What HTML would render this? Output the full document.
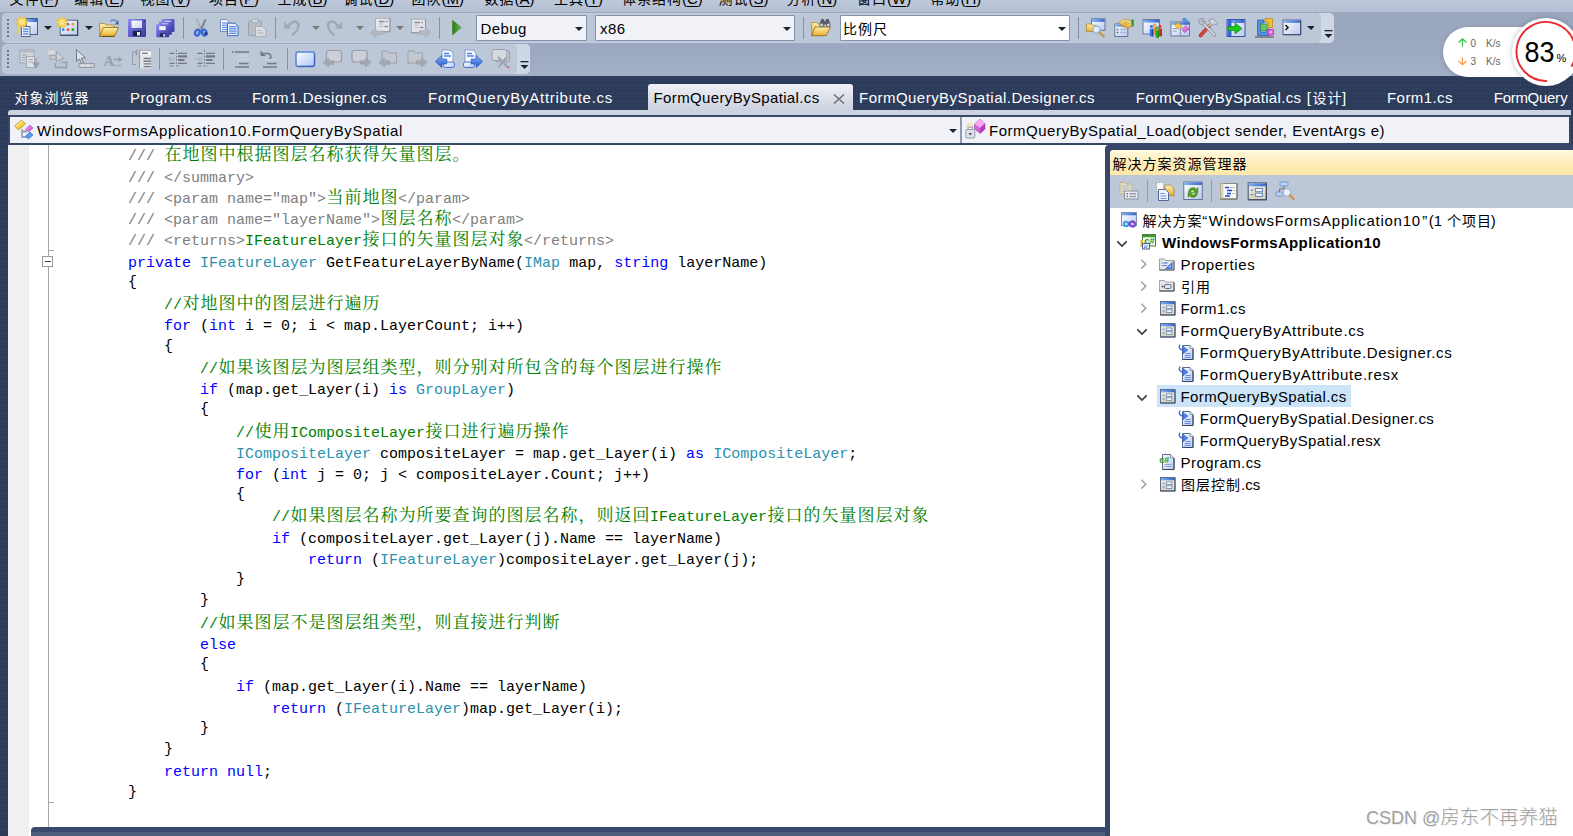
<!DOCTYPE html><html lang="zh"><head><meta charset="utf-8"><title>VS</title><style>
*{box-sizing:border-box}
html,body{margin:0;padding:0}
body{width:1573px;height:836px;overflow:hidden;position:relative;background:#2c3a59;
 font-family:"Liberation Sans","Noto Sans CJK SC",sans-serif;font-size:15px;color:#000}
.abs{position:absolute}
.ft{position:absolute;white-space:pre;line-height:20px;height:20px;margin-top:1px}
.lat{font-size:15px;letter-spacing:0.4px}
.cj{font-size:14px;letter-spacing:1px;padding-left:0.5px}
#dark{left:0;top:76px;width:1573px;height:760px;background-color:#2c3b5a;
 background-image:radial-gradient(circle at 1px 1px,#31405f 0.8px,rgba(0,0,0,0) 1.2px);background-size:4px 4px}
#menu{left:0;top:0;width:1573px;height:12px;background:linear-gradient(#bdc8da,#b4bfd3);overflow:hidden}
#menu>span{position:absolute;top:-11px;font-size:15px;line-height:20px;white-space:pre}
#menu u{text-decoration-thickness:1px;text-underline-offset:2px}
#tray{left:0;top:12px;width:1573px;height:64px;background:linear-gradient(#9aa7bf,#9ca9c1 60%,#a3afc6)}
.tb{position:absolute;left:2px;height:30px;background:#bcc7d8;border-radius:5px;box-shadow:0 0 0 0.5px #c8d1e0 inset}
.tb .ov{position:absolute;right:0;top:0;width:16px;height:30px;background:#d0d7e4;border-radius:0 5px 5px 0}
.tb .ov:before{content:"";position:absolute;left:-4px;top:0;width:7px;height:30px;background:#bcc7d8;border-radius:0 5px 5px 0}
.ic{position:absolute;width:20px;height:20px}
.ic svg{display:block;width:20px;height:20px;overflow:visible}
.sep{position:absolute;width:1px;height:22px;background:#8591a8}
.dd{position:absolute;width:0;height:0;border-left:4px solid transparent;border-right:4px solid transparent;border-top:4.5px solid #1b2233}
.dd.g{border-top-color:#7d7a76}
.grip{position:absolute;left:6px;width:2px;height:18px;background:repeating-linear-gradient(#6c7890 0,#6c7890 2px,rgba(0,0,0,0) 2px,rgba(0,0,0,0) 4px)}
.combo{position:absolute;top:2px;height:26px;border:1px solid #8693ab;background:#f1f3f9;border-radius:1px}
.combo .ct{position:absolute;left:4px;top:3px;line-height:20px;white-space:pre;color:#000}
.combo .dd{right:3px;top:10.5px}
#tabs span.tab{color:#fff}
#strip{left:8px;top:110px;width:1563px;height:5px;background:#ccd2e0;border-radius:3px 0 0 0}
#nav{left:8px;top:115px;width:1563px;height:30px;background:#36476a}
#nav .c{position:absolute;top:2px;height:26px;background:#f0f2f8}
#ed{left:8px;top:145px;width:1100px;height:691px;background:#fff;overflow:hidden}
#code{position:absolute;left:0;top:0}
.ln{position:absolute;left:120px;white-space:pre;font-family:"Liberation Mono","Noto Serif CJK SC",monospace;font-size:15px;line-height:22px;height:22px}
.ln i{font-style:normal;font-size:17px;letter-spacing:1px;line-height:0;position:relative;top:-0.3px;left:0.5px;font-family:"Noto Serif CJK SC",serif}
.g{color:#808080}.c{color:#008000}.k{color:#0000ff}.t{color:#2b91af}
#se{left:1105px;top:145px;width:468px;height:691px;background:#36476a;border-radius:4px 0 0 0}
#setitle{left:5px;top:5px;width:463px;height:25px;background:linear-gradient(#fff9e0,#ffefc0 45%,#ffe8a6);border-radius:3px 0 0 0}
#setb{left:5px;top:30px;width:463px;height:33px;background:#bcc7d8}
#tree{left:5px;top:63px;width:463px;height:628px;background:#fff}
.row{position:absolute;left:0;height:22px;width:463px}
.chev{position:absolute;width:10px;height:10px}
</style></head><body><svg width="0" height="0" style="position:absolute"><defs>
<linearGradient id="gWin" x1="0" y1="0" x2="1" y2="1"><stop offset="0" stop-color="#ffffff"/><stop offset="1" stop-color="#b9c9ec"/></linearGradient>
<linearGradient id="gTit" x1="0" y1="0" x2="1" y2="0"><stop offset="0" stop-color="#7fb0f2"/><stop offset="1" stop-color="#3566cf"/></linearGradient>
<linearGradient id="gFol" x1="0" y1="0" x2="0" y2="1"><stop offset="0" stop-color="#ffefad"/><stop offset="1" stop-color="#e9ae2a"/></linearGradient>
<linearGradient id="gFol2" x1="0" y1="0" x2="0" y2="1"><stop offset="0" stop-color="#fbe08a"/><stop offset="1" stop-color="#c99a35"/></linearGradient>
<linearGradient id="gGry" x1="0" y1="0" x2="1" y2="1"><stop offset="0" stop-color="#e9ebef"/><stop offset="1" stop-color="#a9adb5"/></linearGradient>
<linearGradient id="gFlp" x1="0" y1="0" x2="1" y2="1"><stop offset="0" stop-color="#8f8ff0"/><stop offset="0.5" stop-color="#5a5acb"/><stop offset="1" stop-color="#38389c"/></linearGradient>
<linearGradient id="gBlu" x1="0" y1="0" x2="0" y2="1"><stop offset="0" stop-color="#86b2f7"/><stop offset="1" stop-color="#2456cf"/></linearGradient>
<linearGradient id="gGrn" x1="0" y1="0" x2="1" y2="0"><stop offset="0" stop-color="#2a7a14"/><stop offset="1" stop-color="#63c04a"/></linearGradient>
<linearGradient id="gLbl" x1="0" y1="0" x2="1" y2="1"><stop offset="0" stop-color="#ffffff"/><stop offset="1" stop-color="#cfd4e8"/></linearGradient>
<radialGradient id="gSpk"><stop offset="0" stop-color="#ffffff"/><stop offset="0.3" stop-color="#ffe672"/><stop offset="0.8" stop-color="#f2bc1a" stop-opacity="0.85"/><stop offset="1" stop-color="#f0b400" stop-opacity="0.5"/></radialGradient>
<linearGradient id="gPnk" x1="0" y1="0" x2="1" y2="1"><stop offset="0" stop-color="#f7a6f3"/><stop offset="1" stop-color="#c046c0"/></linearGradient>
<linearGradient id="gBm" x1="0" y1="0" x2="1" y2="1"><stop offset="0" stop-color="#ffffff"/><stop offset="1" stop-color="#a9c6f8"/></linearGradient>
<linearGradient id="gFrm" x1="0" y1="0" x2="0" y2="1"><stop offset="0" stop-color="#f6f1df"/><stop offset="1" stop-color="#d9d1b5"/></linearGradient>
</defs></svg>
<div id="menu" class="abs">
<span style="left:9px"><span class="cj">文件</span>(<u>F</u>)</span>
<span style="left:73.7px"><span class="cj">编辑</span>(<u>E</u>)</span>
<span style="left:140px"><span class="cj">视图</span>(<u>V</u>)</span>
<span style="left:208.5px"><span class="cj">项目</span>(<u>P</u>)</span>
<span style="left:277px"><span class="cj">生成</span>(<u>B</u>)</span>
<span style="left:343px"><span class="cj">调试</span>(<u>D</u>)</span>
<span style="left:411px"><span class="cj">团队</span>(<u>M</u>)</span>
<span style="left:484px"><span class="cj">数据</span>(<u>A</u>)</span>
<span style="left:553.4px"><span class="cj">工具</span>(<u>T</u>)</span>
<span style="left:621.5px"><span class="cj">体系结构</span>(<u>C</u>)</span>
<span style="left:718px"><span class="cj">测试</span>(<u>S</u>)</span>
<span style="left:786px"><span class="cj">分析</span>(<u>N</u>)</span>
<span style="left:856.5px"><span class="cj">窗口</span>(<u>W</u>)</span>
<span style="left:930px"><span class="cj">帮助</span>(<u>H</u>)</span>
</div>
<div id="tray" class="abs"></div>
<div class="tb" style="top:13px;width:1332px">
<div class="grip" style="top:6px;left:5px"></div>
<div class="ic" style="left:16px;top:5px"><svg viewBox="0 0 20 20"><rect x="0" y="2" width="2" height="14" fill="#f3cf4a" opacity="0.8"/><rect x="8.5" y="0.5" width="11" height="16" fill="url(#gWin)" stroke="#4c5f86" stroke-width="1"/><rect x="9" y="1" width="10" height="3" fill="url(#gTit)"/><rect x="3.5" y="8.5" width="8.5" height="10" fill="#f4f7ff" stroke="#53658c" stroke-width="1"/><path d="M5 11h5.5M5 13.5h5.5M5 16h5.5" stroke="#5c8fe8" stroke-width="1.4"/><g><circle cx="4" cy="4" r="5.600" fill="url(#gSpk)"/><path d="M4 -1v10M-1 4h10M0.5 0.5l7 7M7.5 0.5l-7 7" stroke="#fff6c8" stroke-width="0.9" opacity="0.9"/><path d="M4 0v8M0 4h8" stroke="#f5c526" stroke-width="0.5"/></g></svg></div>
<div class="dd" style="left:42px;top:13px"></div>
<div class="ic" style="left:56px;top:5px"><svg viewBox="0 0 20 20"><rect x="2.2" y="2.2" width="17.3" height="15" fill="url(#gWin)" stroke="#55688e" stroke-width="1"/><path d="M2.5 17.4h17.2v-15" stroke="#3e4e73" stroke-width="1.2" fill="none"/><circle cx="10" cy="6.2" r="1.4" fill="#7a6fe0"/><circle cx="14.9" cy="6.2" r="1.4" fill="#ff9c1a"/><circle cx="5.2" cy="11.7" r="1.4" fill="#2a8cff"/><circle cx="10" cy="11.7" r="1.4" fill="#ff4a1a"/><circle cx="14.9" cy="11.7" r="1.4" fill="#1fae1f"/><g transform="translate(0,0.5)"><g><circle cx="4" cy="4" r="5.600" fill="url(#gSpk)"/><path d="M4 -1v10M-1 4h10M0.5 0.5l7 7M7.5 0.5l-7 7" stroke="#fff6c8" stroke-width="0.9" opacity="0.9"/><path d="M4 0v8M0 4h8" stroke="#f5c526" stroke-width="0.5"/></g></g></svg></div>
<div class="dd" style="left:83px;top:13px"></div>
<div class="ic" style="left:97px;top:5px"><svg viewBox="0 0 20 20"><path d="M0.5 5.5h5l1.5 1.5h8v11.5h-14.5z" fill="url(#gFol)" stroke="#a98a3a" stroke-width="0.8"/><path d="M4.5 9.5h15l-4 9h-15z" fill="url(#gFol)" stroke="#8a6a1c" stroke-width="0.8"/><path d="M3 18.3h12.3" stroke="#4a3a10" stroke-width="0.8"/><path d="M11.5 3.2c2.5-2 5.5-1.5 6.6 1" fill="none" stroke="#5f86c6" stroke-width="1.5"/><path d="M19.6 2.2v4.3h-4z" fill="#3b64ad"/></svg></div>
<div class="ic" style="left:125px;top:5px"><svg viewBox="0 0 20 20"><rect x="1" y="1" width="18" height="18" rx="1.2" fill="url(#gFlp)"/><rect x="4.5" y="2.5" width="10.5" height="7.5" fill="url(#gLbl)"/><rect x="6" y="13" width="8" height="5" fill="#1c1c3c"/><rect x="10" y="14" width="3" height="3.5" fill="#e8e8f4"/><rect x="16.5" y="2.5" width="1.5" height="1.5" fill="#2c2c80"/></svg></div>
<div class="ic" style="left:153px;top:5px"><svg viewBox="0 0 20 20"><g transform="translate(6.5,1)"><rect x="0" y="0" width="13" height="13" rx="1" fill="url(#gFlp)"/><rect x="3" y="1.8" width="6.5" height="4" fill="#eef0fa"/><rect x="4" y="9" width="5.5" height="3.5" fill="#23234a"/><rect x="7" y="9.8" width="2" height="2.5" fill="#d8d8ec"/></g><g transform="translate(3.8,3.7)"><rect x="0" y="0" width="13" height="13" rx="1" fill="url(#gFlp)"/><rect x="3" y="1.8" width="6.5" height="4" fill="#eef0fa"/><rect x="4" y="9" width="5.5" height="3.5" fill="#23234a"/><rect x="7" y="9.8" width="2" height="2.5" fill="#d8d8ec"/></g><g transform="translate(1.2,6.3)"><rect x="0" y="0" width="13" height="13" rx="1" fill="url(#gFlp)"/><rect x="3" y="1.8" width="6.5" height="4" fill="#eef0fa"/><rect x="4" y="9" width="5.5" height="3.5" fill="#23234a"/><rect x="7" y="9.8" width="2" height="2.5" fill="#d8d8ec"/></g></svg></div>
<div class="sep" style="left:181px;top:4px"></div>
<div class="ic" style="left:189px;top:5px"><svg viewBox="0 0 20 20"><path d="M4.300 1.300h2.200l4.500 10h-2.500z" fill="#9a9fa8"/><path d="M15.700 1.300h-2.200l-4.500 10h2.500z" fill="#7f848e"/><path d="M5.300 1.800l3.800 8.500" stroke="#d5d8dd" stroke-width="0.800"/><ellipse cx="6.400" cy="14.600" rx="2.300" ry="3" transform="rotate(22 6.400 14.600)" fill="#9ab8ee" stroke="#3a68d2" stroke-width="2.300"/><ellipse cx="13.300" cy="14.600" rx="2.300" ry="3" transform="rotate(-22 13.300 14.600)" fill="#9ab8ee" stroke="#3a68d2" stroke-width="2.300"/><circle cx="14.600" cy="15.600" r="1.300" fill="#1c2f60"/></svg></div>
<div class="ic" style="left:217px;top:5px"><svg viewBox="0 0 20 20"><path d="M1.5 1.5h6l3 3v9h-9z" fill="#f5f8ff" stroke="#6f86b8" stroke-width="0.9"/><path d="M3.0 5.0h6" stroke="#4f86e6" stroke-width="1.1"/><path d="M3.0 7.2h6" stroke="#4f86e6" stroke-width="1.1"/><path d="M3.0 9.4h6" stroke="#4f86e6" stroke-width="1.1"/><path d="M3.0 11.600000000000001h6" stroke="#4f86e6" stroke-width="1.1"/><path d="M8.5 5.2h7.5l3 3v9.5h-10.5z" fill="#eaf1ff" stroke="#2f59b6" stroke-width="0.9"/><path d="M10.0 8.7h7.5" stroke="#3f77e2" stroke-width="1.1"/><path d="M10.0 10.899999999999999h7.5" stroke="#3f77e2" stroke-width="1.1"/><path d="M10.0 13.099999999999998h7.5" stroke="#3f77e2" stroke-width="1.1"/><path d="M10.0 15.299999999999997h7.5" stroke="#3f77e2" stroke-width="1.1"/></svg></div>
<div class="ic" style="left:245px;top:5px"><svg viewBox="0 0 20 20"><rect x="1.5" y="3" width="13" height="14.5" rx="1" fill="#b9bdc6" stroke="#9398a3" stroke-width="0.8"/><rect x="5" y="1.2" width="6" height="3.5" rx="1" fill="#d4d7dd" stroke="#9a9fa9" stroke-width="0.7"/><path d="M8.5 8.5h7l3.5 3.5v6.5h-10.5z" fill="#d9dce2" stroke="#a2a7b1" stroke-width="0.8"/><path d="M10.5 12.5h4M10.5 15h6" stroke="#aeb3bd" stroke-width="1"/></svg></div>
<div class="sep" style="left:273px;top:4px"></div>
<div class="ic" style="left:281px;top:5px"><svg viewBox="0 0 20 20"><path d="M5.500 8C8 4 12 2.300 14.500 4.500C17 7 15 13 10 16.500" fill="none" stroke="#a3a8b3" stroke-width="2.500" stroke-linecap="round"/><path d="M1.200 3.700v7.100h7.100z" fill="#a3a8b3"/></svg></div>
<div class="dd g" style="left:310px;top:13px"></div>
<div class="ic" style="left:325px;top:5px"><svg viewBox="0 0 20 20"><path d="M11 8C8.500 4 4.500 2.300 2 4.500C-0.500 7 1.500 13 6.500 16.500" fill="none" stroke="#a3a8b3" stroke-width="2.500" stroke-linecap="round"/><path d="M15.300 3.700v7.100h-7.100z" fill="#a3a8b3"/></svg></div>
<div class="dd g" style="left:354px;top:13px"></div>
<div class="ic" style="left:369px;top:5px"><svg viewBox="0 0 20 20"><rect x="4.500" y="0.300" width="14.500" height="13.500" fill="#e3e5ea" stroke="#a6abb5" stroke-width="0.900"/><path d="M4.500 13.800h14.500v-13.500" fill="none" stroke="#8d929c" stroke-width="1"/><path d="M8 3.500h6M8 6h4M8 8.500h4.500" stroke="#b9bdc6" stroke-width="1.100"/><path d="M8 3.500h5.500M15 3.500h1.500M13.500 8.500h3.500" stroke="#8a8f99" stroke-width="1.300"/><path d="M-0.800 14.800l5.800-4.600v2.800h6.500v3.600h-6.500v2.800z" fill="#b4b8c1" stroke="#a0a5af" stroke-width="0.500"/></svg></div>
<div class="dd g" style="left:394px;top:13px"></div>
<div class="ic" style="left:408px;top:5px"><svg viewBox="0 0 20 20"><rect x="1.500" y="1.300" width="14" height="13.500" fill="#e3e5ea" stroke="#a6abb5" stroke-width="0.900"/><path d="M1.500 14.800h14v-13.500" fill="none" stroke="#8d929c" stroke-width="1"/><path d="M4.500 4.500h6M4.500 7h4M4.500 9.500h4.500" stroke="#b9bdc6" stroke-width="1.100"/><path d="M4.500 4.500h5.500M11.500 4.500h1.500M10 9.500h3.500" stroke="#8a8f99" stroke-width="1.300"/><path d="M21 14.600l-5.800-4.800v2.900h-6v3.800h6v2.900z" fill="#b4b8c1" stroke="#a0a5af" stroke-width="0.500"/></svg></div>
<div class="sep" style="left:437px;top:4px"></div>
<div class="ic" style="left:445px;top:5px"><svg viewBox="0 0 20 20"><path d="M5.5 2.3l8.7 7.3-8.7 7.3z" fill="url(#gGrn)" stroke="#2a7a14" stroke-width="0.5"/></svg></div>
<div class="combo" style="left:473.5px;width:111px"><span class="ct lat" id="cb1">Debug</span><div class="dd"></div></div>
<div class="combo" style="left:593px;width:199.5px"><span class="ct lat" id="cb2">x86</span><div class="dd"></div></div>
<div class="sep" style="left:801px;top:4px"></div>
<div class="ic" style="left:809px;top:5px"><svg viewBox="0 0 20 20"><path d="M0.7 4.5h5l1.3 1.5h6v11.5h-12.3z" fill="url(#gFol)" stroke="#a98a3a" stroke-width="0.8"/><path d="M4 9h15.5l-4.5 8.7h-14.3z" fill="url(#gFol)" stroke="#8a6a1c" stroke-width="0.8"/><path d="M9 6.5l1.6-5h2l0.6 2.5h1.6l0.6-2.5h2l1.6 5" fill="#5a5f6b" stroke="#3c404a" stroke-width="0.7"/><circle cx="10.7" cy="7" r="1.9" fill="#cfd3dc" stroke="#4a4e59" stroke-width="0.8"/><circle cx="17.3" cy="7" r="1.9" fill="#cfd3dc" stroke="#4a4e59" stroke-width="0.8"/></svg></div>
<div class="combo" style="left:838px;width:230px;background:#fff"><span class="ct" style="left:1.5px"><span class="cj">比例尺</span></span><div class="dd"></div></div>
<div class="sep" style="left:1076px;top:4px"></div>
<div class="ic" style="left:1084px;top:5px"><svg viewBox="0 0 20 20"><rect x="5.5" y="0.8" width="13.5" height="11.5" fill="url(#gWin)" stroke="#5a6c94" stroke-width="0.9"/><rect x="5.9" y="1.2000000000000002" width="12.7" height="2.6" fill="url(#gTit)"/><path d="M0.5 6h5l1 1.2h3v6.3h-9z" fill="url(#gFol)" stroke="#a58432" stroke-width="0.7"/><circle cx="10.5" cy="11.5" r="3.6" fill="#d9ecfb" stroke="#8fb6dc" stroke-width="1.3"/><path d="M13.2 14.2l4.6 4.3" stroke="#c9983a" stroke-width="2.2" stroke-linecap="round"/></svg></div>
<div class="ic" style="left:1112px;top:5px"><svg viewBox="0 0 20 20"><rect x="0.8" y="6" width="13" height="12.5" fill="url(#gWin)" stroke="#5a6c94" stroke-width="0.9"/><rect x="1.2000000000000002" y="6.4" width="12.2" height="2.2" fill="url(#gTit)"/><path d="M2.5 11.5h2M2.5 14.5h2" stroke="#6a7aa0" stroke-width="1.4"/><path d="M6 11.5h6M6 14.5h6" stroke="#a9b6d4" stroke-width="1.4"/><path d="M4.5 4.5l5-3.5 7 1.5 2 5-4 2.5-6-1.5z" fill="url(#gFol)" stroke="#a8862c" stroke-width="0.7"/><rect x="17.5" y="1.5" width="2.3" height="7" fill="#2d9a3a"/><path d="M6.5 5l5 4M8.5 3.5l5 4M10.5 2.5l4.5 3.5" stroke="#a0781c" stroke-width="0.7"/></svg></div>
<div class="ic" style="left:1140px;top:5px"><svg viewBox="0 0 20 20"><rect x="1" y="1.5" width="16.5" height="14.5" fill="url(#gWin)" stroke="#5a6c94" stroke-width="0.9"/><rect x="1.4" y="1.9" width="15.7" height="2.6" fill="url(#gTit)"/><circle cx="12.5" cy="7.2" r="1.6" fill="#f0a030"/><path d="M10.8 9.5h3.4v7.5h-3.4z" fill="#f0a030"/><path d="M13.0 9.5h1.2v7.5h-1.2z" fill="#c07a10"/><circle cx="9.5" cy="8.6" r="1.6" fill="#3a6ee8"/><path d="M7.8 10.899999999999999h3.4v7.5h-3.4z" fill="#3a6ee8"/><path d="M10.0 10.899999999999999h1.2v7.5h-1.2z" fill="#1c44b0"/><circle cx="18" cy="8.4" r="1.6" fill="#e83a2a"/><path d="M16.3 10.7h3.4v7.5h-3.4z" fill="#e83a2a"/><path d="M18.5 10.7h1.2v7.5h-1.2z" fill="#a81a10"/><circle cx="15.2" cy="10" r="1.6" fill="#2eb42e"/><path d="M13.5 12.3h3.4v7.5h-3.4z" fill="#2eb42e"/><path d="M15.7 12.3h1.2v7.5h-1.2z" fill="#128012"/></svg></div>
<div class="ic" style="left:1168px;top:5px"><svg viewBox="0 0 20 20"><rect x="1" y="4" width="18.5" height="14" fill="url(#gWin)" stroke="#5a6c94" stroke-width="0.9"/><rect x="1.4" y="4.4" width="17.7" height="2.4" fill="url(#gTit)"/><path d="M10.3 6.5v11.3" stroke="#6a7aa0" stroke-width="0.8"/><path d="M2.8 10.5h5M2.8 13h4" stroke="#8a98b8" stroke-width="1.2"/><path d="M13.5 0.5l3-0.5 2 2.5-3 2.2z" fill="#4f9be8" stroke="#2a62b8" stroke-width="0.5" transform="translate(-1,0.3)"/><path d="M3.5 6.5l4-2 3.5 3.8-3.5 2.5z" fill="#f5c838" stroke="#b8901a" stroke-width="0.6" transform="translate(1,0.2)"/><path d="M12 11l4.5-3.5 3 3.5-4.5 3.7z" fill="url(#gPnk)" stroke="#a83aa8" stroke-width="0.6" transform="translate(-0.5,0)"/></svg></div>
<div class="ic" style="left:1196px;top:5px"><svg viewBox="0 0 20 20"><path d="M2.500 17.500l9-10" stroke="#a82018" stroke-width="3.400" stroke-linecap="round"/><path d="M2.500 17.500l9-10" stroke="#e2473c" stroke-width="2" stroke-linecap="round"/><path d="M11 2.500l3.500-2 5 4.500-1.500 2-2-1.500-2 2z" fill="#d3d7df" stroke="#7f8592" stroke-width="0.800"/><path d="M10.500 8.500l2.500-3" stroke="#b9bec8" stroke-width="2.200"/><path d="M5 5l11.500 12" stroke="#7f8592" stroke-width="3.200" stroke-linecap="round"/><path d="M5 5l11.500 12" stroke="#dfe2e8" stroke-width="1.800" stroke-linecap="round"/><path d="M0.800 3.800a3.300 3.300 0 0 1 4.800-3l-2.200 2 1.200 1.400 2.300-1.900a3.300 3.300 0 0 1-4.400 4z" fill="#c6cad3" stroke="#7f8592" stroke-width="0.800"/></svg></div>
<div class="ic" style="left:1224px;top:5px"><svg viewBox="0 0 20 20"><rect x="1" y="1.500" width="18" height="17" fill="url(#gWin)" stroke="#3a57a8" stroke-width="1"/><rect x="1.500" y="2" width="17" height="3" fill="url(#gTit)"/><rect x="1.500" y="2" width="4" height="16" fill="#3a66d4"/><path d="M2 8.500h7v-3.500l7 5.500-7 5.500v-3.500h-7z" fill="#19c819" stroke="#0c8a0c" stroke-width="0.700"/></svg></div>
<div class="ic" style="left:1252px;top:5px"><svg viewBox="0 0 20 20"><path d="M1 19h19" stroke="#7c7c82" stroke-width="1.800"/><path d="M3.500 2h6.500v3h-3.500v9h6v-3h3v6.500h-12z" fill="#4f90e0" stroke="#2a5cae" stroke-width="0.700"/><rect x="6.500" y="6" width="6.500" height="6.500" fill="#6cbf6c" stroke="#3f8f4f" stroke-width="0.700"/><path d="M11 0.500h7.500v9h-4v-5.500h-3.500z" fill="#f2c230" stroke="#b88a10" stroke-width="0.700"/><rect x="14" y="11.500" width="5.500" height="5.500" fill="#e860e0" stroke="#b030a8" stroke-width="0.700"/><rect x="15.800" y="13.300" width="1.900" height="1.900" fill="#fbd0f8"/></svg></div>
<div class="ic" style="left:1280px;top:5px"><svg viewBox="0 0 20 20"><rect x="1" y="2" width="17.500" height="14.500" fill="url(#gWin)" stroke="#53658e" stroke-width="1"/><rect x="1.500" y="2.500" width="16.500" height="2.300" fill="url(#gTit)"/><path d="M1.500 16.800h17.300v-14" stroke="#3c4b70" stroke-width="1" fill="none"/><path d="M3.500 7l2.500 2.500-2.500 2.500" stroke="#111" stroke-width="1.500" fill="none"/></svg></div>
<div class="dd" style="left:1305px;top:13px"></div>
<div class="ov"><svg style="position:absolute;left:6px;top:16.5px" width="9" height="9" viewBox="0 0 9 9"><rect x="0.5" y="0" width="8" height="1.3" fill="#1b2233"/><path d="M0.5 4h8l-4 4z" fill="#1b2233"/></svg></div>
</div>
<div class="tb" style="top:44px;width:528px">
<div class="grip" style="top:6px;left:5px"></div>
<div class="ic" style="left:17px;top:5px"><svg viewBox="0 0 20 20"><rect x="1" y="1" width="14" height="13" fill="#d3d6dc" stroke="#989da8" stroke-width="0.8"/><rect x="1.4" y="1.400" width="13.200" height="2.200" fill="#b5b9c2"/><path d="M3 6h5M3 8.500h4M3 11h4" stroke="#989da8" stroke-width="0.9"/><rect x="7.500" y="7.500" width="8" height="11" fill="#e0e2e7" stroke="#989da8" stroke-width="0.8"/><path d="M9 10.500h5M9 13h5" stroke="#989da8" stroke-width="0.8"/><path d="M17 9v6.500M14.200 14l2.800 4.500 2.800-4.500z" fill="#989da8" stroke="#989da8" stroke-width="1.200"/></svg></div>
<div class="ic" style="left:45px;top:5px"><svg viewBox="0 0 20 20"><rect x="1" y="1" width="7" height="4.500" fill="#d8dbe0" stroke="#c2c6ce" stroke-width="0.8"/><rect x="3" y="6.500" width="6" height="4" fill="#c4c8d0" stroke="#989da8" stroke-width="0.8"/><path d="M9.500 2.500v10l2.500-2 1.800 3.800 1.700-0.800-1.800-3.700 3.300-0.300z" fill="#d0d3da" stroke="#989da8" stroke-width="0.8"/><path d="M8.500 14v4.500h11v-5h-3.500" fill="none" stroke="#989da8" stroke-width="1.500"/></svg></div>
<div class="ic" style="left:73px;top:5px"><svg viewBox="0 0 20 20"><path d="M1.500 0.500v12l3-2.500 2.200 4.500 1.900-0.900-2.200-4.400 4-0.400z" fill="#dfe2e8" stroke="#747984" stroke-width="1"/><rect x="4" y="14.500" width="15.500" height="4" fill="#c6cad2" stroke="#989da8" stroke-width="1"/><path d="M6 16.500h3M10.500 16.500h5" stroke="#eef0f3" stroke-width="1"/></svg></div>
<div class="ic" style="left:101px;top:5px"><svg viewBox="0 0 20 20"><text x="0.5" y="17" font-family='"Liberation Serif",serif' font-size="15" font-weight="bold" fill="#989da8">A</text><path d="M10.500 10.500h6" stroke="#989da8" stroke-width="1.600"/><path d="M15.500 7.500l4 3-4 3z" fill="#989da8"/><path d="M11 16.500h8" stroke="#989da8" stroke-width="1.500" stroke-dasharray="1.500 1.200"/></svg></div>
<div class="ic" style="left:129px;top:5px"><svg viewBox="0 0 20 20"><path d="M5 3h-3.500v12.500h3.500" fill="none" stroke="#989da8" stroke-width="1"/><path d="M5.500 0.500v6" stroke="#989da8" stroke-width="1.600"/><rect x="8.500" y="1" width="11.500" height="18.500" fill="#e4e6ea"/><path d="M8.500 0.800v18.700" stroke="#989da8" stroke-width="1.200"/><path d="M8.500 1.200h11.500" stroke="#989da8" stroke-width="0.800"/><rect x="10" y="3" width="10" height="2.600" fill="#fff"/><path d="M11 4.300h6" stroke="#747984" stroke-width="1.300"/><path d="M12.500 9.500h7.500M12.500 12.200h7.500M12.500 14.900h7.500M12.500 17.600h7.500" stroke="#747984" stroke-width="1.400"/></svg></div>
<div class="sep" style="left:157px;top:4px"></div>
<div class="ic" style="left:165px;top:5px"><svg viewBox="0 0 20 20"><path d="M9.500 1v18" stroke="#747984" stroke-width="1" stroke-dasharray="1.500 1.500"/><path d="M2.500 4.300h5M11 4.300h9M2.500 14.400h5M11 14.400h9" stroke="#747984" stroke-width="1.300"/><path d="M2.500 17h4M11 17h1.500" stroke="#989da8" stroke-width="1.300"/><path d="M11 7.400h9" stroke="#747984" stroke-width="2.200"/><path d="M11 11h6.500" stroke="#747984" stroke-width="2"/><path d="M1 10h7" stroke="#b2b6bf" stroke-width="1.400"/><path d="M0.300 10l4.200-3v6z" fill="#b2b6bf"/></svg></div>
<div class="ic" style="left:193px;top:5px"><svg viewBox="0 0 20 20"><path d="M9.500 1v18" stroke="#747984" stroke-width="1" stroke-dasharray="1.500 1.500"/><path d="M2.500 4.300h5M11 4.300h9M2.500 14.400h5M11 14.400h9" stroke="#747984" stroke-width="1.300"/><path d="M2.500 17h4M11 17h1.500" stroke="#989da8" stroke-width="1.300"/><path d="M11 7.400h9" stroke="#747984" stroke-width="2.200"/><path d="M11 11h6.500" stroke="#747984" stroke-width="2"/><path d="M0.500 10h7" stroke="#b2b6bf" stroke-width="1.400"/><path d="M8.300 10l-4.200-3v6z" fill="#b2b6bf"/></svg></div>
<div class="sep" style="left:221px;top:4px"></div>
<div class="ic" style="left:229px;top:5px"><svg viewBox="0 0 20 20"><path d="M1 3h1.800M4 3h14" stroke="#747984" stroke-width="1.600"/><path d="M5.500 6.800h12M5.500 10.600h12" stroke="#cfd3da" stroke-width="1.200"/><path d="M8 14.500h9.500M4 18h14" stroke="#747984" stroke-width="1.600"/></svg></div>
<div class="ic" style="left:257px;top:5px"><svg viewBox="0 0 20 20"><path d="M3.500 4.500h5.500a3.200 3.200 0 0 1 1.200 6" fill="none" stroke="#747984" stroke-width="1.600"/><path d="M1.500 1.500v5.500h5.500z" fill="#747984"/><path d="M5.500 10.600h12" stroke="#cfd3da" stroke-width="1.200"/><path d="M8 14.500h9.500M4 18h14" stroke="#747984" stroke-width="1.600"/></svg></div>
<div class="sep" style="left:285px;top:4px"></div>
<div class="ic" style="left:293px;top:5px"><svg viewBox="0 0 20 20"><rect x="1" y="3" width="18.500" height="14.500" rx="2.200" fill="url(#gBm)" stroke="#5f86dc" stroke-width="1.600"/><path d="M2.500 17.300h15.500a1.500 1.500 0 0 0 1.500-1.500v-10" fill="none" stroke="#2f56b0" stroke-width="0.900"/></svg></div>
<div class="ic" style="left:321px;top:5px"><svg viewBox="0 0 20 20"><rect x="3.5" y="1.500" width="15" height="11.500" rx="2.500" fill="#cdd0d8" stroke="#989da8" stroke-width="1.200"/><path d="M0 13.500l5.500-4.500v2.700h5v3.600h-5v2.700z" fill="#a3a8b2" stroke="#8f949e" stroke-width="0.500"/></svg></div>
<div class="ic" style="left:349px;top:5px"><svg viewBox="0 0 20 20"><rect x="1" y="1.500" width="15" height="11.500" rx="2.500" fill="#cdd0d8" stroke="#989da8" stroke-width="1.200"/><path d="M20 13.500l-5.500-4.500v2.700h-5v3.600h5v2.700z" fill="#a3a8b2" stroke="#8f949e" stroke-width="0.500"/></svg></div>
<div class="ic" style="left:377px;top:5px"><svg viewBox="0 0 20 20"><path d="M3 2h6l1 2h7.500v10h-14.500z" fill="#c3c7cf" stroke="#989da8" stroke-width="0.900"/><path d="M0 13.500l5.500-4.500v2.700h5v3.600h-5v2.700z" fill="#a3a8b2" stroke="#8f949e" stroke-width="0.500"/></svg></div>
<div class="ic" style="left:405px;top:5px"><svg viewBox="0 0 20 20"><path d="M1 2h6l1 2h7.500v10h-14.500z" fill="#c3c7cf" stroke="#989da8" stroke-width="0.900"/><path d="M20 13.500l-5.500-4.500v2.700h-5v3.600h5v2.700z" fill="#a3a8b2" stroke="#8f949e" stroke-width="0.500"/></svg></div>
<div class="ic" style="left:433px;top:5px"><svg viewBox="0 0 20 20"><path d="M7 1h8l3 3v11h-11z" fill="#f6f9ff" stroke="#7d93c4" stroke-width="0.900"/><path d="M9 4.500h5M9 7h7" stroke="#4c84ea" stroke-width="1.300"/><rect x="8.500" y="13" width="11" height="5.500" rx="2" fill="url(#gBm)" stroke="#4a6fd0" stroke-width="1"/><path d="M0.300 12.500l6.500-6v3.500h5v5h-5v3.500z" fill="url(#gBlu)" stroke="#2450c0" stroke-width="0.600"/></svg></div>
<div class="ic" style="left:461px;top:5px"><svg viewBox="0 0 20 20"><path d="M2 1h8l3 3v11h-11z" fill="#f6f9ff" stroke="#7d93c4" stroke-width="0.900"/><path d="M4 4.500h5M4 7h7" stroke="#4c84ea" stroke-width="1.300"/><rect x="0.500" y="13" width="11" height="5.500" rx="2" fill="url(#gBm)" stroke="#4a6fd0" stroke-width="1"/><path d="M19.700 12.500l-6.500-6v3.500h-5v5h5v3.500z" fill="url(#gBlu)" stroke="#2450c0" stroke-width="0.600"/></svg></div>
<div class="ic" style="left:489px;top:5px"><svg viewBox="0 0 20 20"><rect x="4" y="1.500" width="14.500" height="11.500" rx="2.500" fill="#c5c8d0" stroke="#989da8" stroke-width="1"/><rect x="1" y="0.500" width="15" height="11" rx="2.500" fill="#d6d9df" stroke="#989da8" stroke-width="1"/><path d="M7 8l10 10.500M15 8.500l-7.500 10" stroke="#9fa4ae" stroke-width="2"/><circle cx="17.500" cy="18.500" r="0.800" fill="#e04030"/></svg></div>
<div class="ov"><svg style="position:absolute;left:6px;top:16.5px" width="9" height="9" viewBox="0 0 9 9"><rect x="0.5" y="0" width="8" height="1.3" fill="#1b2233"/><path d="M0.5 4h8l-4 4z" fill="#1b2233"/></svg></div>
</div>
<div id="dark" class="abs"></div>
<div id="tabs" class="abs" style="left:0;top:76px;width:1571px;height:34px;overflow:hidden">
<div class="abs" style="left:648px;top:8px;width:205px;height:26px;background:linear-gradient(#eff1f7,#dde1eb 50%,#ccd2e0);border-radius:3px 3px 0 0"></div>
<span class="ft" style="left:14px;top:11px;color:#fff"><span class="cj">对象浏览器</span></span>
<span id="tb1" class="ft" style="left:130px;letter-spacing:0.531px;top:11px;color:#fff;font-size:15px">Program.cs</span>
<span id="tb2" class="ft" style="left:252px;letter-spacing:0.537px;top:11px;color:#fff;font-size:15px">Form1.Designer.cs</span>
<span id="tb3" class="ft" style="left:428px;letter-spacing:0.722px;top:11px;color:#fff;font-size:15px">FormQueryByAttribute.cs</span>
<span id="tb4" class="ft" style="left:653.6px;letter-spacing:0.358px;top:11px;color:#000;font-size:15px">FormQueryBySpatial.cs</span>
<span id="tb5" class="ft" style="left:859px;letter-spacing:0.475px;top:11px;color:#fff;font-size:15px">FormQueryBySpatial.Designer.cs</span>
<span id="tb7" class="ft" style="left:1387px;letter-spacing:0.436px;top:11px;color:#fff;font-size:15px">Form1.cs</span>
<span id="tb6" class="ft" style="left:1135.8px;letter-spacing:0.343px;top:11px;color:#fff;font-size:15px">FormQueryBySpatial.cs</span>
<span class="ft" style="left:1306.8px;top:11px;color:#fff">[</span>
<span class="ft" style="left:1312px;top:11px;color:#fff"><span class="cj">设计</span></span>
<span class="ft" style="left:1342px;top:11px;color:#fff">]</span>
<span id="tb8" class="ft" style="left:1493.8px;letter-spacing:-0.293px;top:11px;color:#fff;font-size:15px">FormQuer</span>
<span class="ft" style="left:1560.3px;top:11px;color:#fff;letter-spacing:0.3px">y<span style="margin-left:4px">ByAttribute.cs</span></span>
<svg class="abs" style="left:833px;top:18px" width="12" height="10" viewBox="0 0 12 10"><path d="M1 0.5L11 9.5M11 0.5L1 9.5" stroke="#6f7075" stroke-width="1.5" fill="none"/></svg>
</div>
<div id="strip" class="abs"></div>
<div id="nav" class="abs">
<div class="c" style="left:2px;width:950px"></div><div class="c" style="left:954px;width:607px"></div>
<div class="abs" style="left:952px;top:2px;width:2px;height:26px;background:#8e9ab3"></div>
<div class="ic" style="left:6px;top:4px"><svg viewBox="0 0 20 20"><path d="M8 10v8h5M8 12.500h5" fill="none" stroke="#7f8ca8" stroke-width="1.300"/><path d="M0.500 7l7-6 4 4-7 6z" fill="#f3c83c" stroke="#b8901c" stroke-width="0.700"/><path d="M1.500 7l6-5 1.200 1.200-6 5z" fill="#fff2b0" opacity="0.700"/><path d="M11.500 10l4.500-4 3 3-4.500 4z" fill="url(#gPnk)" stroke="#b040b0" stroke-width="0.600"/><path d="M11.500 17l4.500-4 3 3-4.500 4z" fill="#5c9cf0" stroke="#2c64c0" stroke-width="0.600"/></svg></div>
<div class="ic" style="left:957px;top:4px"><svg viewBox="0 0 20 20"><path d="M9.500 5l5.500-5 5 4.500v5.500l-5 4.500-5.500-4.500z" fill="#d860d8" stroke="#a030a0" stroke-width="0.500"/><path d="M9.500 5l5.500-5 5 4.500-5 4.500z" fill="#f8a8f4"/><path d="M15 9v5.500l5-4.500v-5.500z" fill="#b040b4"/><rect x="0.800" y="10.500" width="9" height="8.500" rx="1.200" fill="#dfe2ea" stroke="#8c92a0" stroke-width="0.900"/><path d="M3 10.500v-2.500h4.500v2.500" fill="none" stroke="#a8adb8" stroke-width="1.300"/><path d="M3.500 14h3.500l-1.750 2.500z" fill="#4c5060"/><path d="M2.500 5h5M1.500 7h5" stroke="#f0dc78" stroke-width="1"/></svg></div>
<span id="nv1" class="ft" style="left:29px;letter-spacing:0.664px;top:5px;font-size:15px">WindowsFormsApplication10.FormQueryBySpatial</span>
<span id="nv2" class="ft" style="left:981px;letter-spacing:0.506px;top:5px;font-size:15px">FormQueryBySpatial_Load(object sender, EventArgs e)</span>
<div class="dd" style="left:941px;top:14px"></div>
</div>
<div id="ed" class="abs">
<div class="abs" style="left:0;top:0;width:21px;height:691px;background:#f0f0f0"></div>
<div class="abs" style="left:39.5px;top:0;width:1.5px;height:111px;background:#a5a5a5"></div>
<div class="abs" style="left:39.5px;top:105px;width:6px;height:1px;background:#a5a5a5"></div>
<div class="abs" style="left:39.5px;top:122px;width:1.5px;height:569px;background:#a5a5a5"></div>
<div class="abs" style="left:39.5px;top:657px;width:6px;height:1px;background:#a5a5a5"></div>
<div class="abs" style="left:34px;top:111px;width:11px;height:11px;border:1px solid #9a9a9a;background:#fff"><div class="abs" style="left:1.5px;top:3.5px;width:6px;height:1.5px;background:#3a3a3a"></div></div>
<div class="ln" id="ln1" style="top:1px"><span class="g">/// </span><span class="c"><i>在地图中根据图层名称获得矢量图层。</i></span></div>
<div class="ln" id="ln2" style="top:23px"><span class="g">/// &lt;/summary&gt;</span></div>
<div class="ln" id="ln3" style="top:44px"><span class="g">/// &lt;param name="map"&gt;</span><span class="c"><i>当前地图</i></span><span class="g">&lt;/param&gt;</span></div>
<div class="ln" id="ln4" style="top:65px"><span class="g">/// &lt;param name="layerName"&gt;</span><span class="c"><i>图层名称</i></span><span class="g">&lt;/param&gt;</span></div>
<div class="ln" id="ln5" style="top:86px"><span class="g">/// &lt;returns&gt;</span><span class="c">IFeatureLayer<i>接口的矢量图层对象</i></span><span class="g">&lt;/returns&gt;</span></div>
<div class="ln" id="ln6" style="top:108px"><span class="k">private</span> <span class="t">IFeatureLayer</span> GetFeatureLayerByName(<span class="t">IMap</span> map, <span class="k">string</span> layerName)</div>
<div class="ln" id="ln7" style="top:127px">{</div>
<div class="ln" id="ln8" style="top:150px"><span class="c">    //<i>对地图中的图层进行遍历</i></span></div>
<div class="ln" id="ln9" style="top:171px"><span class="k">    for</span> (<span class="k">int</span> i = 0; i &lt; map.LayerCount; i++)</div>
<div class="ln" id="ln10" style="top:191px">    {</div>
<div class="ln" id="ln11" style="top:214px"><span class="c">        //<i>如果该图层为图层组类型，则分别对所包含的每个图层进行操作</i></span></div>
<div class="ln" id="ln12" style="top:235px"><span class="k">        if</span> (map.get_Layer(i) <span class="k">is</span> <span class="t">GroupLayer</span>)</div>
<div class="ln" id="ln13" style="top:254px">        {</div>
<div class="ln" id="ln14" style="top:278px"><span class="c">            //<i>使用</i>ICompositeLayer<i>接口进行遍历操作</i></span></div>
<div class="ln" id="ln15" style="top:299px"><span class="t">            ICompositeLayer</span> compositeLayer = map.get_Layer(i) <span class="k">as</span> <span class="t">ICompositeLayer</span>;</div>
<div class="ln" id="ln16" style="top:320px"><span class="k">            for</span> (<span class="k">int</span> j = 0; j &lt; compositeLayer.Count; j++)</div>
<div class="ln" id="ln17" style="top:339px">            {</div>
<div class="ln" id="ln18" style="top:362px"><span class="c">                //<i>如果图层名称为所要查询的图层名称，则返回</i>IFeatureLayer<i>接口的矢量图层对象</i></span></div>
<div class="ln" id="ln19" style="top:384px"><span class="k">                if</span> (compositeLayer.get_Layer(j).Name == layerName)</div>
<div class="ln" id="ln20" style="top:405px"><span class="k">                    return</span> (<span class="t">IFeatureLayer</span>)compositeLayer.get_Layer(j);</div>
<div class="ln" id="ln21" style="top:424px">            }</div>
<div class="ln" id="ln22" style="top:445px">        }</div>
<div class="ln" id="ln23" style="top:469px"><span class="c">        //<i>如果图层不是图层组类型，则直接进行判断</i></span></div>
<div class="ln" id="ln24" style="top:490px"><span class="k">        else</span></div>
<div class="ln" id="ln25" style="top:509px">        {</div>
<div class="ln" id="ln26" style="top:532px"><span class="k">            if</span> (map.get_Layer(i).Name == layerName)</div>
<div class="ln" id="ln27" style="top:554px"><span class="k">                return</span> (<span class="t">IFeatureLayer</span>)map.get_Layer(i);</div>
<div class="ln" id="ln28" style="top:573px">        }</div>
<div class="ln" id="ln29" style="top:594px">    }</div>
<div class="ln" id="ln30" style="top:617px"><span class="k">    return</span> <span class="k">null</span>;</div>
<div class="ln" id="ln31" style="top:637px">}</div>
<div class="abs" style="left:23px;top:682px;width:1080px;height:9px;background:linear-gradient(#3a4a6c,#3a4a6c 5px,#4d5d7e 5px);border-radius:4px 0 0 0"></div>
</div>
<div id="se" class="abs">
<div id="setitle" class="abs"><span class="ft" style="left:2px;top:3px"><span class="cj">解决方案资源管理器</span></span></div>
<div id="setb" class="abs">
<div class="ic" style="left:9px;top:6px"><svg viewBox="0 0 20 20"><path d="M1 1.500h5l1 1.500h6v10h-12z" fill="#e2dcc0" stroke="#b5ad8c" stroke-width="0.800"/><path d="M2.500 5h8M2.500 7.500h8M2.500 10h4" stroke="#bfc3cc" stroke-width="1.300"/><rect x="5.500" y="10" width="13.500" height="8" fill="#e9ebf0" stroke="#8c93a4" stroke-width="1"/><path d="M7.500 12.800h1.500M7.500 15.500h1.500" stroke="#6f7686" stroke-width="1.400"/><path d="M10.500 12.800h6.500M10.500 15.500h6.500" stroke="#9aa1b2" stroke-width="1.400"/></svg></div>
<div class="ic" style="left:44.5px;top:6px"><svg viewBox="0 0 20 20"><path d="M1.500 1.500h7v9h-7z" fill="#f8f8f8" stroke="#9a9a9a" stroke-width="0.900" stroke-dasharray="1.200 1"/><path d="M10 4h5.500l3.500 3.500v7h-9z" fill="url(#gFol)" stroke="#a58a3c" stroke-width="0.800"/><path d="M3.500 8.500h7l3 3v8h-10z" fill="#eef3ff" stroke="#53679a" stroke-width="1"/><path d="M5.500 12.500h4M5.500 15h6M5.500 17.500h6" stroke="#6d8fd8" stroke-width="1.100"/></svg></div>
<div class="ic" style="left:73px;top:6px"><svg viewBox="0 0 20 20"><rect x="0.8" y="1" width="18.5" height="17.5" fill="url(#gWin)" stroke="#5a6c94" stroke-width="0.9"/><rect x="1.2000000000000002" y="1.4" width="17.7" height="2.6" fill="url(#gTit)"/><path d="M5.500 11a4.500 4.500 0 0 1 7.800-3l1.700-1.500v5h-5l1.700-1.700a2.600 2.600 0 0 0-4.200 1.200z" fill="#58a020" stroke="#3a7a10" stroke-width="0.400"/><path d="M14.500 12a4.500 4.500 0 0 1-7.800 3l-1.700 1.500v-5h5l-1.700 1.700a2.600 2.600 0 0 0 4.200-1.200z" fill="#58a020" stroke="#3a7a10" stroke-width="0.400"/></svg></div>
<div class="ic" style="left:109px;top:6px"><svg viewBox="0 0 20 20"><rect x="1.500" y="2.500" width="16.500" height="15.500" fill="#fbfbf6" stroke="#8c8878" stroke-width="1"/><rect x="1.500" y="2.500" width="3" height="15.500" fill="#d8d2ba"/><path d="M1.500 18h16.500v-15.500" fill="none" stroke="#6d6a5c" stroke-width="1"/><path d="M6 6.500h4M8 9.500h5M8 12.500h4M6 15h5" stroke="#2040e0" stroke-width="1.300"/><path d="M11 6.500h5M14 9.500h2.500M13 12.500h3" stroke="#b8b8b8" stroke-width="1.100"/></svg></div>
<div class="ic" style="left:137px;top:6px"><svg viewBox="0 0 20 20"><g transform="translate(0.6,1.2) scale(1.25)"><rect x="0.500" y="0.500" width="14.500" height="13.500" fill="url(#gFrm)" stroke="#5c6c90" stroke-width="1"/><rect x="1" y="1" width="13.500" height="2.300" fill="url(#gTit)"/><path d="M2.500 6.300h2.200M2.500 10h2.200" stroke="#7088b8" stroke-width="1"/><rect x="6.300" y="5" width="5.600" height="2.600" fill="#f8fbff" stroke="#6f8fc0" stroke-width="0.900"/><rect x="6.300" y="8.800" width="5.600" height="2.600" fill="#f8fbff" stroke="#6f8fc0" stroke-width="0.900"/><path d="M0.500 14h14.500v-13" fill="none" stroke="#38486c" stroke-width="0.900"/></g></svg></div>
<div class="ic" style="left:165px;top:6px"><svg viewBox="0 0 20 20"><rect x="5" y="1" width="8" height="4" rx="1.200" fill="#bcd3f8" stroke="#6f8fd0" stroke-width="0.900"/><rect x="0.800" y="11" width="7" height="4" rx="1.200" fill="#bcd3f8" stroke="#6f8fd0" stroke-width="0.900"/><path d="M9 5v3M4.500 11v-3h9" fill="none" stroke="#6a7078" stroke-width="1"/><circle cx="12" cy="11.500" r="3.800" fill="#e6f1fb" stroke="#9fb6d6" stroke-width="1.300"/><path d="M14.800 14.300l3.700 3.700" stroke="#e0903a" stroke-width="2.300" stroke-linecap="round"/></svg></div>
<div class="sep" style="left:37px;top:5px;background:#8d99b0"></div>
<div class="sep" style="left:101px;top:5px;background:#8d99b0"></div>
</div>
<div id="tree" class="abs">
<div class="abs" style="left:47px;top:177px;width:194px;height:22px;background:#cce4f7"></div>
<div class="ic" style="left:11px;top:4px"><svg viewBox="0 0 16 16" style="width:16px;height:16px"><rect x="0.500" y="0.500" width="15" height="13" fill="url(#gWin)" stroke="#7f8fb4" stroke-width="1"/><rect x="1" y="1" width="14" height="2.300" fill="url(#gTit)"/><path d="M8 12c-1.500-3-5-3-5 0s3.500 3 5 0c1.500-3 5.500-3.500 6 0s-4.500 3-6 0z" fill="none" stroke="#3a9be8" stroke-width="2"/><path d="M8 12c1.500-3 5.500-3.500 6 0s-4.500 3-6 0z" fill="none" stroke="#8848c8" stroke-width="2"/></svg></div>
<span class="ft" style="left:32px;top:2px"><span class="cj">解决方案</span></span>
<span class="ft" style="left:92.29999999999995px;top:2px;font-family:'Liberation Sans',sans-serif">“</span>
<span id="tr0a" class="ft" style="left:98.70000000000005px;letter-spacing:0.751px;top:2px;font-size:15px">WindowsFormsApplication10</span>
<span class="ft" style="left:312.20000000000005px;top:2px;font-family:'Liberation Sans',sans-serif">”</span>
<span class="ft" style="left:318.79999999999995px;top:2px">(1</span>
<span class="ft" style="left:336.5px;top:2px"><span class="cj">个项目</span></span>
<span class="ft" style="left:380.70000000000005px;top:2px">)</span>
<svg class="chev" style="left:7px;top:30.5px" viewBox="0 0 10 10"><path d="M0.3 2.3L5 7L9.700 2.3" stroke="#3c3c3c" stroke-width="1.600" fill="none"/></svg>
<div class="ic" style="left:30px;top:25.5px"><svg viewBox="0 0 16 16" style="width:16px;height:16px"><rect x="2.500" y="0.500" width="13" height="11.500" fill="#f7fbf2" stroke="#4c7c3c" stroke-width="1"/><rect x="3" y="1" width="12" height="2.300" fill="#3f9a2c"/><text x="4.300" y="10.300" font-family='"Liberation Sans",sans-serif' font-size="8.500" font-weight="bold" fill="#169a16" textLength="10.500" lengthAdjust="spacingAndGlyphs">c#</text><rect x="0.500" y="6" width="2.500" height="7" fill="#e8b82a"/><rect x="2.500" y="9.500" width="7" height="5.500" fill="#eaf0fc" stroke="#4e618c" stroke-width="1"/><path d="M4 12h4M4 13.500h3" stroke="#6c90e0" stroke-width="0.900"/></svg></div>
<span id="tr1" class="ft" style="left:52px;letter-spacing:0.364px;top:23.5px;font-size:15px;font-weight:bold;">WindowsFormsApplication10</span>
<svg class="chev" style="left:29px;top:51px" viewBox="0 0 10 10"><path d="M2.300 0.800L6.800 5.200L2.300 9.600" stroke="#a0a0a0" stroke-width="1.500" fill="none"/></svg>
<div class="ic" style="left:49px;top:48px"><svg viewBox="0 0 16 16" style="width:16px;height:16px"><path d="M0.500 3h5l1.200 1.500h8.300v9.500h-14.500z" fill="#e4e6ea" stroke="#8e939e" stroke-width="0.900"/><path d="M0.500 14h14.500v-9" fill="none" stroke="#4c505a" stroke-width="0.900"/><path d="M2.500 7h1M2.500 9.500h1" stroke="#2c54c0" stroke-width="1.200"/><path d="M4.500 7h4M4.500 9.500h3" stroke="#3c6ce0" stroke-width="1.200"/><path d="M13.500 5.500v7.500h-7.500z" fill="#3f6fe0"/><path d="M12 8.500v3h-3z" fill="#a8c4f8"/></svg></div>
<span id="tr2" class="ft" style="left:70.59999999999991px;letter-spacing:0.643px;top:46px;font-size:15px;">Properties</span>
<svg class="chev" style="left:29px;top:73px" viewBox="0 0 10 10"><path d="M2.300 0.800L6.800 5.200L2.300 9.600" stroke="#a0a0a0" stroke-width="1.500" fill="none"/></svg>
<div class="ic" style="left:49px;top:70px"><svg viewBox="0 0 16 16" style="width:16px;height:16px"><path d="M0.500 2.500h5l1.200 1.500h8.300v9h-14.500z" fill="#e6e7ea" stroke="#9a9da6" stroke-width="0.900"/><path d="M0.500 13h14.500v-8.500" fill="none" stroke="#3c3e46" stroke-width="1"/><rect x="5.500" y="6.500" width="6.500" height="4" rx="1.300" fill="#dfe8f6" stroke="#5a6070" stroke-width="0.900"/><path d="M2.500 8.500h3M3.500 7.300v2.400" stroke="#5a6070" stroke-width="0.900"/></svg></div>
<span class="ft" style="left:70.59999999999991px;top:68px"><span class="cj">引用</span></span>
<svg class="chev" style="left:29px;top:95px" viewBox="0 0 10 10"><path d="M2.300 0.800L6.800 5.200L2.300 9.600" stroke="#a0a0a0" stroke-width="1.500" fill="none"/></svg>
<div class="ic" style="left:49px;top:92px"><svg viewBox="0 0 16 16" style="width:16px;height:16px"><g transform="translate(1,1) scale(1.0)"><rect x="0.500" y="0.500" width="14.500" height="13.500" fill="url(#gFrm)" stroke="#5c6c90" stroke-width="1"/><rect x="1" y="1" width="13.500" height="2.300" fill="url(#gTit)"/><path d="M2.500 6.300h2.200M2.500 10h2.200" stroke="#7088b8" stroke-width="1"/><rect x="6.300" y="5" width="5.600" height="2.600" fill="#f8fbff" stroke="#6f8fc0" stroke-width="0.900"/><rect x="6.300" y="8.800" width="5.600" height="2.600" fill="#f8fbff" stroke="#6f8fc0" stroke-width="0.900"/><path d="M0.500 14h14.500v-13" fill="none" stroke="#38486c" stroke-width="0.900"/></g></svg></div>
<span id="tr4" class="ft" style="left:70.59999999999991px;letter-spacing:0.336px;top:90px;font-size:15px;">Form1.cs</span>
<svg class="chev" style="left:27px;top:119px" viewBox="0 0 10 10"><path d="M0.3 2.3L5 7L9.700 2.3" stroke="#3c3c3c" stroke-width="1.600" fill="none"/></svg>
<div class="ic" style="left:49px;top:114px"><svg viewBox="0 0 16 16" style="width:16px;height:16px"><g transform="translate(1,1) scale(1.0)"><rect x="0.500" y="0.500" width="14.500" height="13.500" fill="url(#gFrm)" stroke="#5c6c90" stroke-width="1"/><rect x="1" y="1" width="13.500" height="2.300" fill="url(#gTit)"/><path d="M2.500 6.300h2.200M2.500 10h2.200" stroke="#7088b8" stroke-width="1"/><rect x="6.300" y="5" width="5.600" height="2.600" fill="#f8fbff" stroke="#6f8fc0" stroke-width="0.900"/><rect x="6.300" y="8.800" width="5.600" height="2.600" fill="#f8fbff" stroke="#6f8fc0" stroke-width="0.900"/><path d="M0.500 14h14.500v-13" fill="none" stroke="#38486c" stroke-width="0.900"/></g></svg></div>
<span id="tr5" class="ft" style="left:70.59999999999991px;letter-spacing:0.679px;top:112px;font-size:15px;">FormQueryByAttribute.cs</span>
<div class="ic" style="left:68px;top:136px"><svg viewBox="0 0 16 16" style="width:16px;height:16px"><path d="M4.500 1.500h7.500l3 3v11h-10.500z" fill="url(#gWin)" stroke="#5a6a8c" stroke-width="1"/><path d="M4.500 15.500h10.500v-10.500" fill="none" stroke="#34405c" stroke-width="1"/><path d="M12 1.500v3h3" fill="#dfe6f6" stroke="#7080a0" stroke-width="0.700"/><path d="M7.500 9.500h5M6.500 11.500h6M6.500 13.500h6" stroke="#4f7fe4" stroke-width="0.900"/><path d="M2 0.500c-1.500 3-0.500 5.500 3.500 5.500" fill="none" stroke="#3f6fe0" stroke-width="1.400"/><path d="M10 6l-5-3.800v7.600z" fill="#4f80ec" stroke="#2a50c0" stroke-width="0.500"/></svg></div>
<span id="tr6" class="ft" style="left:89.79999999999995px;letter-spacing:0.652px;top:134px;font-size:15px;">FormQueryByAttribute.Designer.cs</span>
<div class="ic" style="left:68px;top:158px"><svg viewBox="0 0 16 16" style="width:16px;height:16px"><path d="M4.500 1.500h7.500l3 3v11h-10.500z" fill="url(#gWin)" stroke="#5a6a8c" stroke-width="1"/><path d="M4.500 15.500h10.500v-10.500" fill="none" stroke="#34405c" stroke-width="1"/><path d="M12 1.500v3h3" fill="#dfe6f6" stroke="#7080a0" stroke-width="0.700"/><path d="M7.500 9.500h5M6.500 11.500h6M6.500 13.500h6" stroke="#4f7fe4" stroke-width="0.900"/><path d="M2 0.500c-1.500 3-0.500 5.500 3.500 5.500" fill="none" stroke="#3f6fe0" stroke-width="1.400"/><path d="M10 6l-5-3.800v7.600z" fill="#4f80ec" stroke="#2a50c0" stroke-width="0.500"/></svg></div>
<span id="tr7" class="ft" style="left:89.79999999999995px;letter-spacing:0.699px;top:156px;font-size:15px;">FormQueryByAttribute.resx</span>
<svg class="chev" style="left:27px;top:185px" viewBox="0 0 10 10"><path d="M0.3 2.3L5 7L9.700 2.3" stroke="#3c3c3c" stroke-width="1.600" fill="none"/></svg>
<div class="ic" style="left:49px;top:180px"><svg viewBox="0 0 16 16" style="width:16px;height:16px"><g transform="translate(1,1) scale(1.0)"><rect x="0.500" y="0.500" width="14.500" height="13.500" fill="url(#gFrm)" stroke="#5c6c90" stroke-width="1"/><rect x="1" y="1" width="13.500" height="2.300" fill="url(#gTit)"/><path d="M2.500 6.300h2.200M2.500 10h2.200" stroke="#7088b8" stroke-width="1"/><rect x="6.300" y="5" width="5.600" height="2.600" fill="#f8fbff" stroke="#6f8fc0" stroke-width="0.900"/><rect x="6.300" y="8.800" width="5.600" height="2.600" fill="#f8fbff" stroke="#6f8fc0" stroke-width="0.900"/><path d="M0.500 14h14.500v-13" fill="none" stroke="#38486c" stroke-width="0.900"/></g></svg></div>
<span id="tr8" class="ft" style="left:70.59999999999991px;letter-spacing:0.358px;top:178px;font-size:15px;">FormQueryBySpatial.cs</span>
<div class="ic" style="left:68px;top:202px"><svg viewBox="0 0 16 16" style="width:16px;height:16px"><path d="M4.500 1.500h7.500l3 3v11h-10.500z" fill="url(#gWin)" stroke="#5a6a8c" stroke-width="1"/><path d="M4.500 15.500h10.500v-10.500" fill="none" stroke="#34405c" stroke-width="1"/><path d="M12 1.500v3h3" fill="#dfe6f6" stroke="#7080a0" stroke-width="0.700"/><path d="M7.500 9.500h5M6.500 11.500h6M6.500 13.500h6" stroke="#4f7fe4" stroke-width="0.900"/><path d="M2 0.500c-1.500 3-0.500 5.500 3.500 5.500" fill="none" stroke="#3f6fe0" stroke-width="1.400"/><path d="M10 6l-5-3.800v7.600z" fill="#4f80ec" stroke="#2a50c0" stroke-width="0.500"/></svg></div>
<span id="tr9" class="ft" style="left:89.79999999999995px;letter-spacing:0.425px;top:200px;font-size:15px;">FormQueryBySpatial.Designer.cs</span>
<div class="ic" style="left:68px;top:224px"><svg viewBox="0 0 16 16" style="width:16px;height:16px"><path d="M4.500 1.500h7.500l3 3v11h-10.500z" fill="url(#gWin)" stroke="#5a6a8c" stroke-width="1"/><path d="M4.500 15.500h10.500v-10.500" fill="none" stroke="#34405c" stroke-width="1"/><path d="M12 1.500v3h3" fill="#dfe6f6" stroke="#7080a0" stroke-width="0.700"/><path d="M7.500 9.500h5M6.500 11.500h6M6.500 13.500h6" stroke="#4f7fe4" stroke-width="0.900"/><path d="M2 0.500c-1.500 3-0.500 5.500 3.500 5.500" fill="none" stroke="#3f6fe0" stroke-width="1.400"/><path d="M10 6l-5-3.800v7.600z" fill="#4f80ec" stroke="#2a50c0" stroke-width="0.500"/></svg></div>
<span id="tr10" class="ft" style="left:89.79999999999995px;letter-spacing:0.412px;top:222px;font-size:15px;">FormQueryBySpatial.resx</span>
<div class="ic" style="left:49px;top:246px"><svg viewBox="0 0 16 16" style="width:16px;height:16px"><path d="M3.500 0.500h8l3.500 3.500v11.500h-11.500z" fill="url(#gWin)" stroke="#5a6a8c" stroke-width="1"/><path d="M3.500 15.500h11.500v-11.500" fill="none" stroke="#34405c" stroke-width="1"/><path d="M11.500 0.500v3.500h3.500" fill="#e4eaf8" stroke="#7080a0" stroke-width="0.700"/><path d="M5.500 10.500h7M5.500 12.500h7" stroke="#8ea0c8" stroke-width="0.900"/><text x="0.300" y="9.300" font-family='"Liberation Sans",sans-serif' font-size="8.500" font-weight="bold" fill="#11a011" textLength="10" lengthAdjust="spacingAndGlyphs">c#</text></svg></div>
<span id="tr11" class="ft" style="left:70.59999999999991px;letter-spacing:0.421px;top:244px;font-size:15px;">Program.cs</span>
<svg class="chev" style="left:29px;top:271px" viewBox="0 0 10 10"><path d="M2.300 0.800L6.800 5.200L2.300 9.600" stroke="#a0a0a0" stroke-width="1.500" fill="none"/></svg>
<div class="ic" style="left:49px;top:268px"><svg viewBox="0 0 16 16" style="width:16px;height:16px"><g transform="translate(1,1) scale(1.0)"><rect x="0.500" y="0.500" width="14.500" height="13.500" fill="url(#gFrm)" stroke="#5c6c90" stroke-width="1"/><rect x="1" y="1" width="13.500" height="2.300" fill="url(#gTit)"/><path d="M2.500 6.300h2.200M2.500 10h2.200" stroke="#7088b8" stroke-width="1"/><rect x="6.300" y="5" width="5.600" height="2.600" fill="#f8fbff" stroke="#6f8fc0" stroke-width="0.900"/><rect x="6.300" y="8.800" width="5.600" height="2.600" fill="#f8fbff" stroke="#6f8fc0" stroke-width="0.900"/><path d="M0.500 14h14.500v-13" fill="none" stroke="#38486c" stroke-width="0.900"/></g></svg></div>
<span class="ft" style="left:70.59999999999991px;top:266px"><span class="cj">图层控制</span><span style="font-size:15px">.cs</span></span>
</div></div>
<div class="abs" style="left:1443px;top:27px;width:140px;height:50px;background:#fff;border-radius:25px;box-shadow:0 1px 4px rgba(60,70,100,.35)"></div>
<div class="abs" style="left:1512px;top:18px;width:68px;height:68px;background:#fff;border-radius:34px;box-shadow:0 0 5px rgba(60,70,100,.35)"></div>
<svg class="abs" style="left:1443px;top:10px" width="130" height="80" viewBox="1443 10 130 80"><path d="M1546.3 81A29.5 29.5 0 1 1 1571.8 65.8" fill="none" stroke="#e8282c" stroke-width="1.9" stroke-linecap="round"/><path d="M1462.5 46.5v-7M1458.5 42.5l4-3.7 4 3.7" fill="none" stroke="#34c04a" stroke-width="1.2"/><path d="M1462.5 57.5v7M1458.5 61l4 3.7 4-3.7" fill="none" stroke="#ff9a3c" stroke-width="1.2"/><text x="1470.5" y="46.8" font-family='"Liberation Sans",sans-serif' font-size="10" fill="#666">0</text><text x="1486" y="46.8" font-family='"Liberation Sans",sans-serif' font-size="10" fill="#666">K/s</text><text x="1470.5" y="64.6" font-family='"Liberation Sans",sans-serif' font-size="10" fill="#666">3</text><text x="1486" y="64.6" font-family='"Liberation Sans",sans-serif' font-size="10" fill="#666">K/s</text><text x="1524.5" y="61.5" font-family='"Liberation Sans",sans-serif' font-size="30" fill="#000" textLength="30" lengthAdjust="spacingAndGlyphs">83</text><text x="1556.5" y="61.5" font-family='"Liberation Sans",sans-serif' font-size="11" fill="#000">%</text></svg>
<div class="abs" style="left:1366px;top:805px;height:24px;line-height:24px;white-space:pre;color:#a0a0a0;font-size:18px;text-shadow:0 0 1px #fff,1px 1px 1px #e8e8e8">CSDN @<span style="font-size:19.6px;font-weight:300">房东不再养猫</span></div>
</body></html>
